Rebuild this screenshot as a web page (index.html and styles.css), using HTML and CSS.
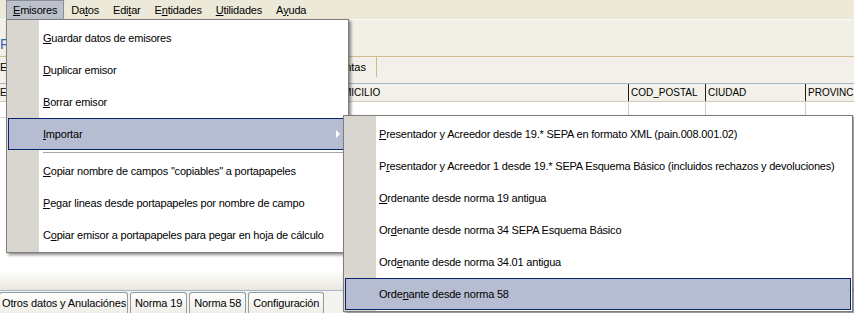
FILE: index.html
```html
<!DOCTYPE html>
<html lang="es">
<head>
<meta charset="utf-8">
<title>Emisores</title>
<link rel="stylesheet" href="styles.css">
</head>
<body>
<div class="app">
  <div class="menubar">
    <span class="mb-item open"><u>E</u>misores</span>
    <span class="mb-item">Da<u>t</u>os</span>
    <span class="mb-item">Edi<u>t</u>ar</span>
    <span class="mb-item">E<u>n</u>tidades</span>
    <span class="mb-item"><u>U</u>tilidades</span>
    <span class="mb-item">A<u>y</u>uda</span>
  </div>
  <div class="toolbar"><span class="f-label">F</span></div>
  <div class="tabrow">
    <div class="tab t1">E</div>
    <div class="tab t2">Cuentas</div>
  </div>
  <div class="grid-head">
    <div class="hc c0">E</div>
    <div class="hc c1">DOMICILIO</div>
    <div class="hc c2">COD_POSTAL</div>
    <div class="hc c3">CIUDAD</div>
    <div class="hc c4">PROVINC</div>
  </div>
  <div class="grid-body">
    <div class="row">
      <div class="bc c0"></div>
      <div class="bc c1"></div>
      <div class="bc c2"></div>
      <div class="bc c3"></div>
      <div class="bc c4"></div>
    </div>
  </div>
  <div class="statusbar"></div>
  <div class="bottom-tabs">
    <div class="btab first">Otros datos y Anulaciónes</div>
    <div class="btab">Norma 19</div>
    <div class="btab">Norma 58</div>
    <div class="btab">Configuración</div>
  </div>

  <div class="menu main-menu">
    <div class="mi"><u>G</u>uardar datos de emisores</div>
    <div class="mi"><u>D</u>uplicar emisor</div>
    <div class="mi"><u>B</u>orrar emisor</div>
    <div class="mi hl"><u>I</u>mportar<span class="arrow"></span></div>
    <div class="sep"></div>
    <div class="mi"><u>C</u>opiar nombre de campos "copiables" a portapapeles</div>
    <div class="mi"><u>P</u>egar lineas desde portapapeles por nombre de campo</div>
    <div class="mi">C<u>o</u>piar emisor a portapapeles para pegar en hoja de cálculo</div>
  </div>

  <div class="menu sub-menu">
    <div class="mi"><u>P</u>resentador y Acreedor desde 19.* SEPA en formato XML (pain.008.001.02)</div>
    <div class="mi">P<u>r</u>esentador y Acreedor 1 desde 19.* SEPA Esquema Básico (incluidos rechazos y devoluciones)</div>
    <div class="mi"><u>O</u>rdenante desde norma 19 antigua</div>
    <div class="mi">Or<u>d</u>enante desde norma 34 SEPA Esquema Básico</div>
    <div class="mi">Ord<u>e</u>nante desde norma 34.01 antigua</div>
    <div class="mi hl">Orde<u>n</u>ante desde norma 58</div>
  </div>
</div>
</body>
</html>
```

FILE: styles.css
```css
* { box-sizing: border-box; }
html, body { margin: 0; padding: 0; }
body {
  width: 854px;
  height: 313px;
  overflow: hidden;
  background: #fff;
  color: #000;
  font-family: "Liberation Sans", Arial, sans-serif;
  font-size: 11px;
}
u { text-decoration: underline; text-underline-offset: 1px; }

.app {
  position: relative;
  width: 854px;
  height: 313px;
  display: flex;
  flex-direction: column;
  overflow: hidden;
}

/* menu bar */
.menubar {
  height: 19px;
  flex: none;
  background: #ece9d8;
  display: flex;
  padding-left: 6px;
  letter-spacing: -0.2px;
}
.mb-item {
  display: flex;
  align-items: center;
  padding: 0 6px;
  border: 1px solid transparent;
  white-space: nowrap;
}
.mb-item.open {
  background: #bcc0c9;
  border-color: #8a8d95;
  border-bottom-color: #bcc0c9;
}

/* toolbar */
.toolbar {
  height: 38px;
  flex: none;
  background: #f1efe6;
  border-top: 1px solid #faf9f4;
  border-bottom: 1px solid #cdbf92;
  padding-top: 16px;
}
.f-label {
  color: #2d66c0;
  font-size: 14px;
}

/* tab row */
.tabrow {
  height: 27px;
  flex: none;
  display: flex;
  background: #f2f0e8;
  border-bottom: 1px solid #a6b5cb;
}
.tab {
  height: 20px;
  display: flex;
  align-items: center;
  border-right: 1px solid #cbbd8f;
}
.tab.t1 { width: 316px; }
.tab.t2 { width: 61px; justify-content: flex-end; padding-right: 10px; }

/* grid */
.grid-head {
  height: 18px;
  flex: none;
  display: flex;
  background: #f2f0e8;
  border-bottom: 1px solid #d0ccbd;
  font-size: 10px;
}
.hc {
  display: flex;
  align-items: center;
  padding-left: 2px;
  border-right: 1px solid #1d1d1d;
  white-space: nowrap;
  overflow: hidden;
}
.c0 { width: 326px; padding-left: 0; }
.c1 { width: 303px; }
.c2 { width: 77px; }
.c3 { width: 100px; }
.c4 { flex: 1; border-right: none; }

.grid-body { flex: 1; background: #fff; }
.row { display: flex; height: 16px; border-bottom: 1px solid #d8d5cc; }
.bc { border-right: 1px solid #d0cdc4; }
.bc.c4 { border-right: none; }

/* status strip */
.statusbar {
  height: 19px;
  flex: none;
  background: linear-gradient(#fcfcfa, #e9e7df);
  border-bottom: 1px solid #a3b4cb;
}

/* bottom tabs */
.bottom-tabs {
  height: 22px;
  flex: none;
  display: flex;
  align-items: flex-end;
  background: #f4f3ee;
  gap: 2px;
  letter-spacing: -0.15px;
}
.btab {
  height: 21px;
  display: flex;
  align-items: center;
  padding: 0 4px;
  border: 1px solid #929c9f;
  border-bottom: none;
  border-radius: 3px 3px 0 0;
  background: linear-gradient(#fefefe, #efeee8);
  white-space: nowrap;
}
.btab.first { margin-left: -1px; padding: 0 1px 0 2px; }

/* popup menus */
.menu {
  position: absolute;
  border: 1px solid #7e7e7e;
  background: linear-gradient(to right, #d8d6cf 0, #d8d6cf 32px, #fff 32px) no-repeat;
  background-color: #fff;
  padding: 2px 1px 1px 1px;
  box-shadow: 2px 2px 3px rgba(0, 0, 0, 0.45);
  letter-spacing: -0.2px;
}
.main-menu { left: 6px; top: 19px; width: 343px; z-index: 2; }
.sub-menu { left: 343px; top: 115px; width: 510px; z-index: 3; }

.mi {
  position: relative;
  height: 32px;
  display: flex;
  align-items: center;
  padding-left: 34px;
  border: 1px solid transparent;
  white-space: nowrap;
}
.sub-menu .mi { padding-left: 33px; }
.mi.hl {
  background: #b6bdd2;
  border-color: #0a246a;
}
.sep {
  height: 1px;
  margin: 2px 0 2px 35px;
  background: #a6a6a6;
}
.arrow {
  position: absolute;
  right: 6px;
  top: 11px;
  width: 0;
  height: 0;
  border-left: 4px solid #fff;
  border-top: 4px solid transparent;
  border-bottom: 4px solid transparent;
}
```
